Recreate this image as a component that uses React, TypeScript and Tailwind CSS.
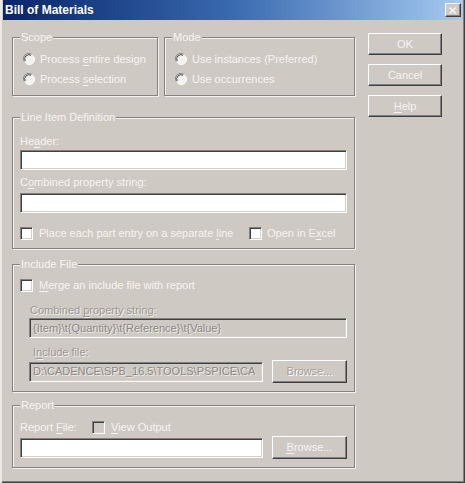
import React from 'react'

const font = { fontFamily: '"Liberation Sans", Arial, sans-serif' }

function U({ children }: { children: React.ReactNode }) {
    return <span className="underline underline-offset-[2px]">{children}</span>
}

function Group({ label, className, children }: { label: string; className: string; children?: React.ReactNode }) {
    return (
        <div className={`relative border border-[#86827e] shadow-[inset_1px_1px_0_#f4f0ec,1px_1px_0_#f4f0ec] ${className}`}>
            <span className="absolute left-[7px] -top-[7px] px-[1px] bg-[#cfc9c3] leading-[13px] text-[#f6f4f0]">
                {label}
            </span>
            {children}
        </div>
    )
}

function Radio({ children }: { children: React.ReactNode }) {
    return (
        <div className="flex items-center h-[20px] gap-[5px]">
            <svg width="12" height="12" viewBox="0 0 12 12">
                <circle cx="6" cy="6" r="5.5" fill="#f4f2ee" />
                <path d="M1.2 8.5 A5.3 5.3 0 0 1 8.5 1.2" stroke="#808080" strokeWidth="1" fill="none" />
                <path d="M2.2 8 A4.3 4.3 0 0 1 8 2.2" stroke="#404040" strokeWidth="1" fill="none" />
                <path d="M10.8 3.5 A5.3 5.3 0 0 1 3.5 10.8" stroke="#ffffff" strokeWidth="1" fill="none" />
            </svg>
            <span className="leading-[13px] text-[#f6f4f0]">{children}</span>
        </div>
    )
}

function Check({ gray }: { gray?: boolean }) {
    return (
        <div
            className={`w-[13px] h-[13px] shrink-0 border border-t-[#808080] border-l-[#808080] border-r-white border-b-white shadow-[inset_1px_1px_0_#404040,inset_-1px_-1px_0_#d4d0c8] ${
                gray ? 'bg-[#cfc9c3]' : 'bg-white'
            }`}
        />
    )
}

function TextBox({ className, value, disabled }: { className: string; value?: string; disabled?: boolean }) {
    return (
        <div
            className={`h-[20px] border border-t-[#808080] border-l-[#808080] border-r-white border-b-white shadow-[inset_1px_1px_0_#404040,inset_-1px_-1px_0_#d4d0c8] flex items-center px-[3px] overflow-hidden whitespace-nowrap leading-[13px] ${
                disabled ? 'bg-[#cfc9c3] text-[#8c8986] [text-shadow:1px_1px_0_#eeeae6]' : 'bg-white'
            } ${className}`}
        >
            {value}
        </div>
    )
}

function Button({ children, className, dim }: { children: React.ReactNode; className: string; dim?: boolean }) {
    return (
        <div
            className={`flex items-center justify-center border border-t-white border-l-white border-r-[#404040] border-b-[#404040] shadow-[inset_-1px_-1px_0_#808080] leading-[13px] ${
                dim ? 'text-[#a4a09c] [text-shadow:1px_1px_0_#fff]' : 'text-[#f6f4f0]'
            } ${className}`}
        >
            {children}
        </div>
    )
}

export default function App() {
    return (
        <div
            className="w-[465px] h-[483px] bg-[#cfc9c3] text-[11px] shadow-[inset_2px_0_0_#ece8e2,inset_-1px_-1px_0_#404040,inset_-2px_-2px_0_#808080] overflow-hidden"
            style={font}
        >
            {/* title bar */}
            <div className="ml-[3px] mr-[2px] h-[20px] flex items-center justify-between pl-[2px] pr-[2px] bg-gradient-to-r from-[#0a246a] via-[#3a6ab0] to-[#a6caf0]">
                <span className="font-bold text-white text-[12px] leading-[14px]">Bill of Materials</span>
                <div className="w-[16px] h-[14px] bg-[#cfc9c3] border border-t-white border-l-white border-r-[#404040] border-b-[#404040] shadow-[inset_-1px_-1px_0_#808080] flex items-center justify-center">
                    <svg width="8" height="7" viewBox="0 0 8 7">
                        <path d="M0.5 0.5 L7 6.5 M7 0.5 L0.5 6.5" stroke="#f6f4f0" strokeWidth="1.6" />
                    </svg>
                </div>
            </div>

            <div className="flex pl-[12px]">
                <div className="w-[343px] mt-[17px] flex flex-col">
                    <div className="flex gap-[6px]">
                        <Group label="Scope" className="w-[146px] h-[59px] pt-[11px] pl-[10px]">
                            <Radio>
                                Process <U>e</U>ntire design
                            </Radio>
                            <Radio>
                                Process <U>s</U>election
                            </Radio>
                        </Group>
                        <Group label="Mode" className="w-[191px] h-[59px] pt-[11px] pl-[10px]">
                            <Radio>Use instances (Preferred)</Radio>
                            <Radio>Use occurrences</Radio>
                        </Group>
                    </div>

                    <Group label="Line Item Definition" className="mt-[21px] h-[132px] pt-[17px] pl-[7px]">
                        <div className="leading-[13px] text-[#f6f4f0]">
                            He<U>a</U>der:
                        </div>
                        <TextBox className="mt-[2px] w-[327px]" />
                        <div className="mt-[6px] leading-[13px] text-[#f6f4f0]">
                            C<U>o</U>mbined property string:
                        </div>
                        <TextBox className="mt-[4px] w-[327px]" />
                        <div className="mt-[14px] flex items-center h-[13px]">
                            <Check />
                            <span className="ml-[6px] w-[210px] leading-[13px] text-[#f6f4f0]">
                                Place each part entry on a separate <U>l</U>ine
                            </span>
                            <Check />
                            <span className="ml-[5px] leading-[13px] text-[#f6f4f0]">
                                Open in E<U>x</U>cel
                            </span>
                        </div>
                    </Group>

                    <Group label="Include File" className="mt-[15px] h-[128px] pt-[14px] pl-[7px]">
                        <div className="flex items-center h-[13px]">
                            <Check />
                            <span className="ml-[6px] leading-[13px] text-[#f6f4f0]">
                                <U>M</U>erge an include file with report
                            </span>
                        </div>
                        <div className="mt-[12px] pl-[10px] leading-[13px] text-[#9c9894] [text-shadow:1px_1px_0_#f4f0ec]">
                            Combined <U>p</U>roperty string:
                        </div>
                        <TextBox
                            className="mt-[1px] ml-[9px] w-[318px]"
                            disabled
                            value="{Item}\t{Quantity}\t{Reference}\t{Value}"
                        />
                        <div className="mt-[8px] pl-[13px] leading-[13px] text-[#9c9894] [text-shadow:1px_1px_0_#f4f0ec]">
                            I<U>n</U>clude file:
                        </div>
                        <div className="mt-[1px] ml-[9px] flex items-center h-[23px]">
                            <TextBox className="w-[234px]" disabled value="D:\CADENCE\SPB_16.5\TOOLS\PSPICE\CA" />
                            <Button className="ml-[9px] w-[75px] h-[23px]" dim>
                                Browse...
                            </Button>
                        </div>
                    </Group>

                    <Group label="Report" className="mt-[13px] h-[63px] pt-[15px] pl-[7px]">
                        <div className="flex items-center h-[13px]">
                            <span className="w-[72px] leading-[13px] text-[#f6f4f0]">
                                Report <U>F</U>ile:
                            </span>
                            <Check gray />
                            <span className="ml-[6px] leading-[13px] text-[#f6f4f0]">
                                <U>V</U>iew Output
                            </span>
                        </div>
                        <div className="mt-[2px] flex items-center h-[23px]">
                            <TextBox className="w-[243px]" />
                            <Button className="ml-[9px] w-[75px] h-[23px]">
                                <U>B</U>rowse...
                            </Button>
                        </div>
                    </Group>
                </div>

                <div className="ml-[13px] mt-[13px] flex flex-col gap-[9px]">
                    <Button className="w-[74px] h-[22px]">OK</Button>
                    <Button className="w-[74px] h-[22px]">Cancel</Button>
                    <Button className="w-[74px] h-[22px]">
                        <U>H</U>elp
                    </Button>
                </div>
            </div>
        </div>
    )
}
